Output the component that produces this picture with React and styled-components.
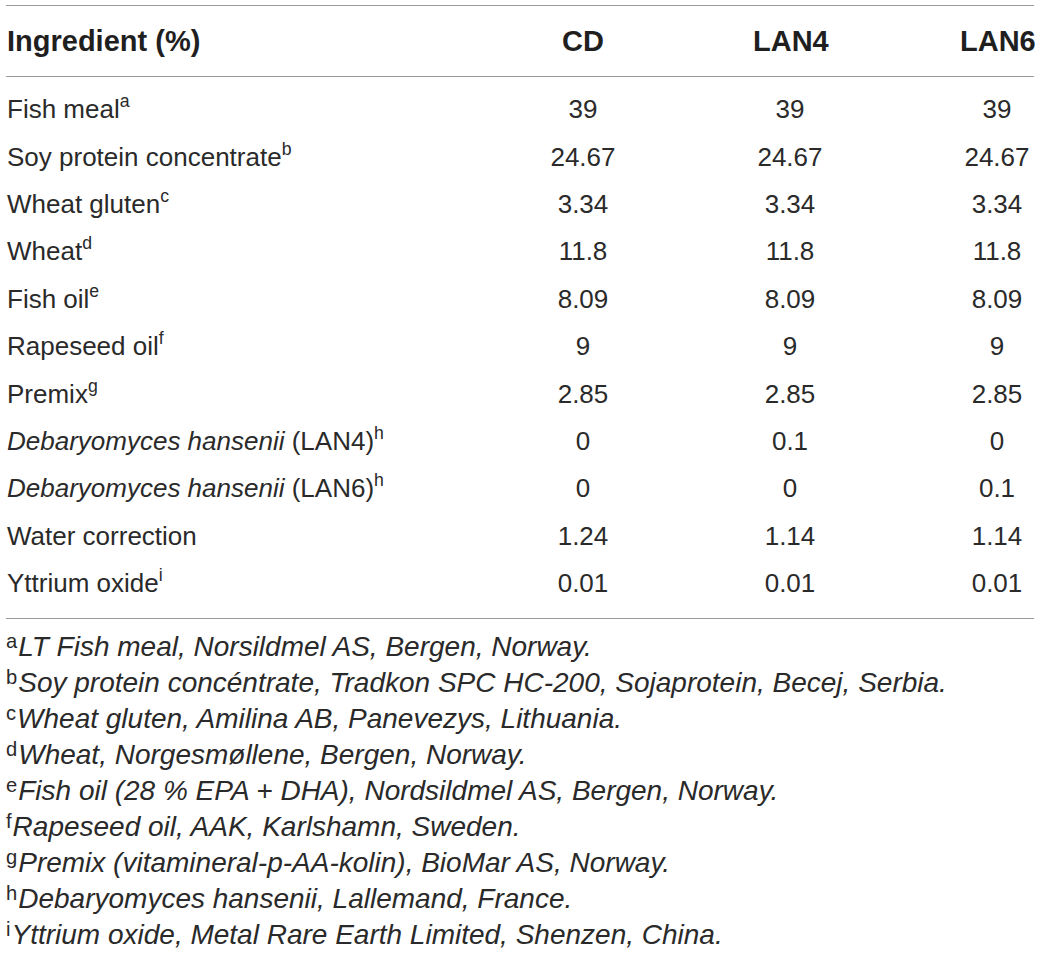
import styled, { createGlobalStyle } from "styled-components";

const GlobalStyle = createGlobalStyle`
  body {
    margin: 0;
    background: #ffffff;
    font-family: "Liberation Sans", Arial, sans-serif;
    color: #2a2a2a;
  }
`;

const Page = styled.div`
  width: 1028px;
  padding: 5px 6px 0 6px;
`;

const Table = styled.div`
  border-top: 1.5px solid #9a9a9a;
`;

const Grid = styled.div`
  display: grid;
  grid-template-columns: 1fr 74px 74px 74px;
  column-gap: 133px;
  align-items: center;
`;

const HeaderRow = styled(Grid)`
  height: 70px;
  border-bottom: 1.5px solid #9a9a9a;
  font-weight: 700;
  font-size: 29px;
  color: #1f1f1f;
  padding-left: 1px;
`;

const Body = styled.div`
  padding: 9px 0 11px;
  border-bottom: 1.5px solid #9a9a9a;
`;

const Row = styled(Grid)`
  height: 47.4px;
  font-size: 26px;
  padding-left: 1px;
`;

const Label = styled.div`
  white-space: nowrap;
`;

const Value = styled.div`
  text-align: center;
  white-space: nowrap;
`;

const Sup = styled.sup`
  font-size: 0.68em;
  line-height: 0;
  vertical-align: 0.6em;
  font-style: normal;
`;

const Notes = styled.div`
  padding-top: 10px;
  font-size: 28px;
  font-style: italic;
`;

const Note = styled.div`
  height: 36px;
  line-height: 36px;
  white-space: nowrap;
`;

const NoteMark = styled.span`
  font-style: normal;
  font-size: 0.72em;
  vertical-align: 0.42em;
  line-height: 0;
  margin-right: 1px;
`;

const rows = [
  { label: "Fish meal", sup: "a", values: ["39", "39", "39"] },
  { label: "Soy protein concentrate", sup: "b", values: ["24.67", "24.67", "24.67"] },
  { label: "Wheat gluten", sup: "c", values: ["3.34", "3.34", "3.34"] },
  { label: "Wheat", sup: "d", values: ["11.8", "11.8", "11.8"] },
  { label: "Fish oil", sup: "e", values: ["8.09", "8.09", "8.09"] },
  { label: "Rapeseed oil", sup: "f", values: ["9", "9", "9"] },
  { label: "Premix", sup: "g", values: ["2.85", "2.85", "2.85"] },
  { label: "(LAN4)", species: "Debaryomyces hansenii", sup: "h", values: ["0", "0.1", "0"] },
  { label: "(LAN6)", species: "Debaryomyces hansenii", sup: "h", values: ["0", "0", "0.1"] },
  { label: "Water correction", values: ["1.24", "1.14", "1.14"] },
  { label: "Yttrium oxide", sup: "i", values: ["0.01", "0.01", "0.01"] },
];

const notes = [
  ["a", "LT Fish meal, Norsildmel AS, Bergen, Norway."],
  ["b", "Soy protein concéntrate, Tradkon SPC HC-200, Sojaprotein, Becej, Serbia."],
  ["c", "Wheat gluten, Amilina AB, Panevezys, Lithuania."],
  ["d", "Wheat, Norgesmøllene, Bergen, Norway."],
  ["e", "Fish oil (28 % EPA + DHA), Nordsildmel AS, Bergen, Norway."],
  ["f", "Rapeseed oil, AAK, Karlshamn, Sweden."],
  ["g", "Premix (vitamineral-p-AA-kolin), BioMar AS, Norway."],
  ["h", "Debaryomyces hansenii, Lallemand, France."],
  ["i", "Yttrium oxide, Metal Rare Earth Limited, Shenzen, China."],
];

export default function App() {
  return (
    <Page>
      <GlobalStyle />
      <Table>
        <HeaderRow>
          <Label>Ingredient (%)</Label>
          <Value>CD</Value>
          <Value>LAN4</Value>
          <Value>LAN6</Value>
        </HeaderRow>

        <Body>
          {rows.map((row, i) => (
            <Row key={i}>
              <Label>
                {row.species ? <i>{row.species} </i> : null}
                {row.label}
                {row.sup ? <Sup>{row.sup}</Sup> : null}
              </Label>
              {row.values.map((v, j) => (
                <Value key={j}>{v}</Value>
              ))}
            </Row>
          ))}
        </Body>
      </Table>

      <Notes>
        {notes.map(([mark, text]) => (
          <Note key={mark}>
            <NoteMark>{mark}</NoteMark>
            {text}
          </Note>
        ))}
      </Notes>
    </Page>
  );
}
